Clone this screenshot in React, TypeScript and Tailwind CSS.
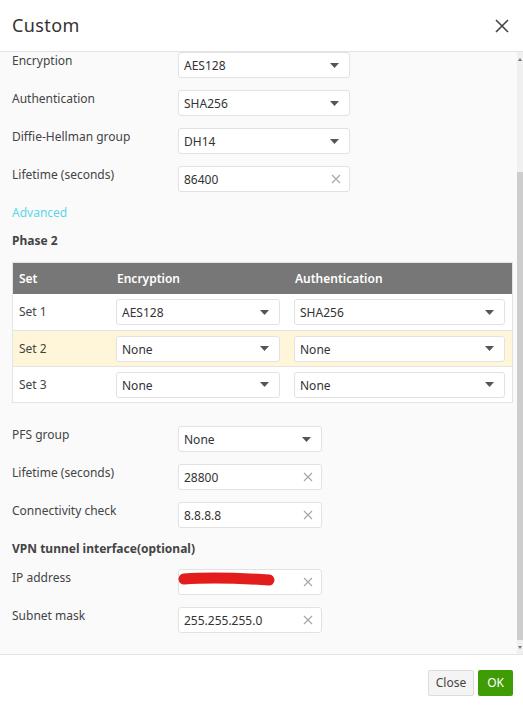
import React from 'react';

const font = { fontFamily: '"Noto Sans", "Liberation Sans", sans-serif' };

function Caret() {
  return (
    <svg width="9" height="5" viewBox="0 0 9 5" className="shrink-0">
      <path d="M0 0 H9 L4.5 5 Z" fill="#555" />
    </svg>
  );
}

function ClearX() {
  return (
    <svg width="10" height="10" viewBox="0 0 10 10" className="shrink-0">
      <path d="M1 1 L9 9 M9 1 L1 9" stroke="#a8a8a8" strokeWidth="1.2" />
    </svg>
  );
}

function Select({ value, width }: { value: string; width: string }) {
  return (
    <div
      className={`${width} h-[26px] flex items-center justify-between pl-[5px] pr-[10px] bg-white border border-[#e2e2e2] rounded-[3px] text-[12px] text-[#333]`}
    >
      <span className="pt-[2px]">{value}</span>
      <Caret />
    </div>
  );
}

function Input({ value, width, children }: { value: string; width: string; children?: React.ReactNode }) {
  return (
    <div
      className={`relative ${width} h-[26px] flex items-center justify-between pl-[5px] pr-[8px] bg-white border border-[#e2e2e2] rounded-[3px] text-[12px] text-[#333]`}
    >
      <span className="pt-[2px]">{value}</span>
      <ClearX />
      {children}
    </div>
  );
}

function Row({ label, children, className = '' }: { label: string; children: React.ReactNode; className?: string }) {
  return (
    <div className={`flex items-start ${className}`}>
      <div className="w-[166px] pt-[1px] text-[12px] text-[#444] leading-[16px]">{label}</div>
      {children}
    </div>
  );
}

const sets = [
  { name: 'Set 1', enc: 'AES128', auth: 'SHA256', hl: false },
  { name: 'Set 2', enc: 'None', auth: 'None', hl: true },
  { name: 'Set 3', enc: 'None', auth: 'None', hl: false },
];

export default function App() {
  return (
    <div className="w-[523px] h-[705px] bg-white flex flex-col overflow-hidden" style={font}>
      {/* Header */}
      <div className="h-[52px] shrink-0 flex items-center justify-between pl-[12px] pr-[14px] border-b border-[#e4e4e4]">
        <h1 className="text-[18px] text-[#333] tracking-[0.4px]">Custom</h1>
        <svg width="14" height="14" viewBox="0 0 14 14">
          <path d="M1 1 L13 13 M13 1 L1 13" stroke="#444" strokeWidth="1.6" />
        </svg>
      </div>

      {/* Body */}
      <div className="h-[602px] shrink-0 flex bg-[#fafafa]">
        <div className="flex-1 overflow-hidden pl-[12px] pr-[4px]">
          <Row label="Encryption">
            <Select value="AES128" width="w-[172px]" />
          </Row>
          <Row label="Authentication" className="mt-[12px]">
            <Select value="SHA256" width="w-[172px]" />
          </Row>
          <Row label="Diffie-Hellman group" className="mt-[12px]">
            <Select value="DH14" width="w-[172px]" />
          </Row>
          <Row label="Lifetime (seconds)" className="mt-[12px]">
            <Input value="86400" width="w-[172px]" />
          </Row>

          <div className="mt-[13px] text-[12px] text-[#5dd6e8] leading-[16px]">Advanced</div>
          <div className="mt-[12px] text-[12px] font-bold text-[#444] leading-[16px]">Phase 2</div>

          {/* Phase 2 table */}
          <div className="mt-[13px] w-[501px] border border-[#e4e4e4] bg-white">
            <div className="h-[31px] flex items-center bg-[#777] text-white text-[12px] font-semibold">
              <div className="w-[104px] pl-[6px]">Set</div>
              <div className="w-[178px]">Encryption</div>
              <div className="flex-1">Authentication</div>
            </div>
            {sets.map((s, i) => (
              <div
                key={s.name}
                className={`h-[36px] flex items-center text-[12px] text-[#444] ${i > 0 ? 'border-t border-[#e4e4e4]' : ''} ${s.hl ? 'bg-[#fff6d9]' : 'bg-white'}`}
              >
                <div className="w-[103px] pl-[6px]">{s.name}</div>
                <div className="w-[178px]">
                  <Select value={s.enc} width="w-[164px]" />
                </div>
                <Select value={s.auth} width="w-[211px]" />
              </div>
            ))}
          </div>

          <Row label="PFS group" className="mt-[23px]">
            <Select value="None" width="w-[144px]" />
          </Row>
          <Row label="Lifetime (seconds)" className="mt-[12px]">
            <Input value="28800" width="w-[144px]" />
          </Row>
          <Row label="Connectivity check" className="mt-[12px]">
            <Input value="8.8.8.8" width="w-[144px]" />
          </Row>

          <div className="mt-[13px] text-[12px] font-bold text-[#444] leading-[16px]">VPN tunnel interface(optional)</div>

          <Row label="IP address" className="mt-[12px]">
            <Input value="" width="w-[144px]">
              <svg className="absolute left-[-2px] top-[1px]" width="102" height="20" viewBox="0 0 102 20">
                <path d="M7 8 C32 6 62 7 92 9" stroke="#e31c1c" strokeWidth="11" strokeLinecap="round" fill="none" />
              </svg>
            </Input>
          </Row>
          <Row label="Subnet mask" className="mt-[12px]">
            <Input value="255.255.255.0" width="w-[144px]" />
          </Row>
        </div>

        {/* Scrollbar */}
        <div className="w-[6px] shrink-0 flex flex-col bg-[#f0f0f0]">
          <div className="h-[14px] flex items-center justify-center">
            <svg width="4" height="3" viewBox="0 0 4 3">
              <path d="M0 3 L2 0 L4 3 Z" fill="#777" />
            </svg>
          </div>
          <div className="h-[106px]" />
          <div className="flex-1 bg-[#cdcdcd]" />
          <div className="h-[14px] flex items-center justify-center">
            <svg width="4" height="3" viewBox="0 0 4 3">
              <path d="M0 0 L4 0 L2 3 Z" fill="#777" />
            </svg>
          </div>
        </div>
      </div>

      {/* Footer */}
      <div className="flex-1 flex items-center justify-end gap-[4px] pr-[10px] pt-[5px] border-t border-[#e4e4e4] bg-white">
        <button className="h-[26px] px-[7px] bg-[#f4f4f4] border border-[#dcdcdc] rounded-[2px] text-[12px] text-[#444]">
          Close
        </button>
        <button className="h-[26px] px-[9px] bg-[#3f9c04] rounded-[2px] text-[12px] text-white">OK</button>
      </div>
    </div>
  );
}
